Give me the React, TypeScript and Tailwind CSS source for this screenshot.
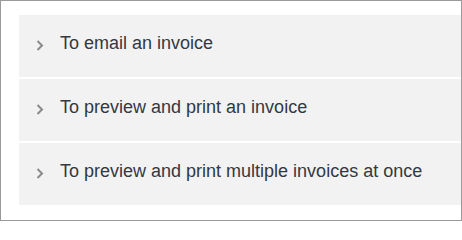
import React from "react";

const items = [
  "To email an invoice",
  "To preview and print an invoice",
  "To preview and print multiple invoices at once",
];

function Chevron() {
  return (
    <svg width="8" height="11" viewBox="0 0 8 11" className="shrink-0 mb-[2px]">
      <path d="M1.5 1 L6 5.5 L1.5 10" fill="none" stroke="#8a8a8a" strokeWidth="2" />
    </svg>
  );
}

export default function App() {
  return (
    <div className="w-[462px] h-[221px] border border-[#9a9a9a] bg-white pt-[14px] pl-[18px] font-['Liberation_Sans',Arial,sans-serif]">
      <div className="flex flex-col gap-[2px]">
        {items.map((t) => (
          <div key={t} className="h-[62px] bg-[#f2f2f2] flex items-center pl-[17px]">
            <Chevron />
            <span className="ml-[16px] mb-[7px] text-[18px] text-[#333842] leading-none">{t}</span>
          </div>
        ))}
      </div>
    </div>
  );
}
